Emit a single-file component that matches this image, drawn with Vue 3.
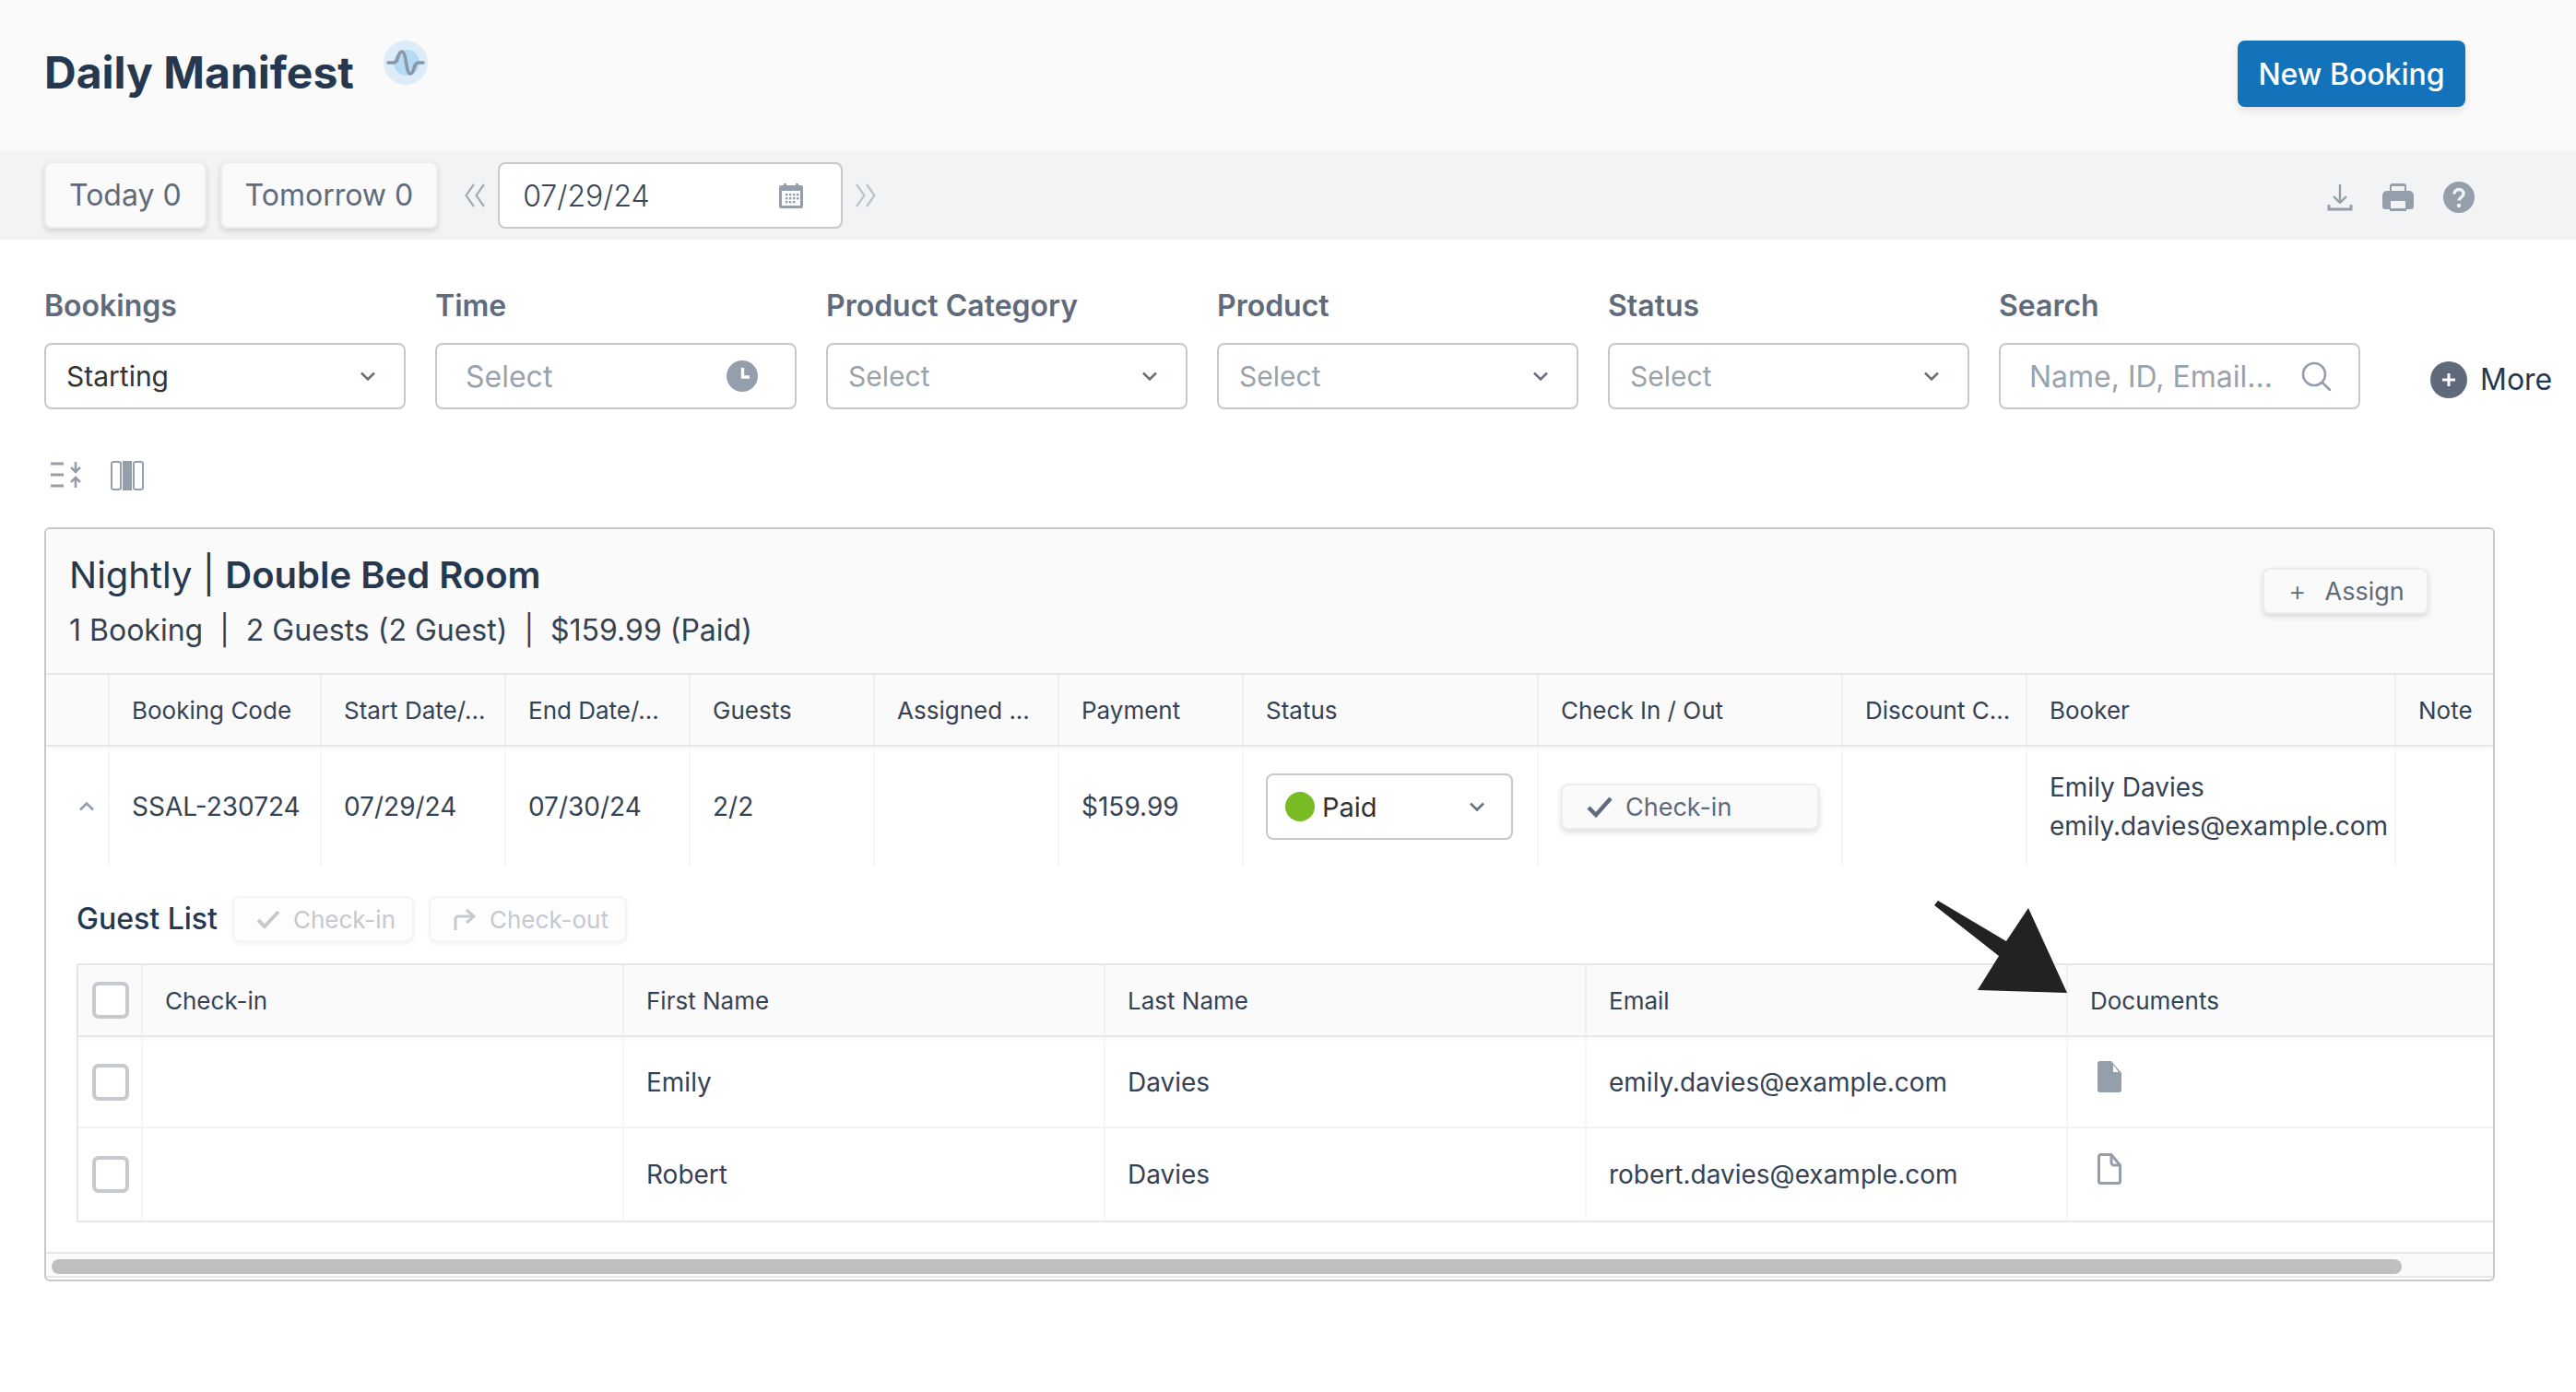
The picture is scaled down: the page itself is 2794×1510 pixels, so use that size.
<script setup>
const filters = [
  { label: 'Bookings', value: 'Starting', icon: 'chevron', filled: true },
  { label: 'Time', value: 'Select', icon: 'clock', big: true },
  { label: 'Product Category', value: 'Select', icon: 'chevron' },
  { label: 'Product', value: 'Select', icon: 'chevron' },
  { label: 'Status', value: 'Select', icon: 'chevron' },
  { label: 'Search', value: 'Name, ID, Email...', icon: 'search', big: true },
];

const bookingCols = [
  '',
  'Booking Code',
  'Start Date/...',
  'End Date/...',
  'Guests',
  'Assigned ...',
  'Payment',
  'Status',
  'Check In / Out',
  'Discount C...',
  'Booker',
  'Note',
];

const guestCols = ['', 'Check-in', 'First Name', 'Last Name', 'Email', 'Documents'];

const guests = [
  { first: 'Emily', last: 'Davies', email: 'emily.davies@example.com', hasDoc: true },
  { first: 'Robert', last: 'Davies', email: 'robert.davies@example.com', hasDoc: false },
];
</script>

<template>
  <div class="page">
    <header class="top">
      <div class="top__title">
        <h1>Daily Manifest</h1>
        <span class="pulse">
          <svg width="48" height="48" viewBox="0 0 48 48">
            <circle cx="24" cy="24" r="24" fill="#dcecf9" />
            <circle cx="25" cy="24" r="14" fill="#b5daf4" />
            <path d="M5 24h6c3 0 4-3 5-7 1-3 2-5 4-5s3 3 4 9c1 6 2 15 5 15s4-6 5-9c1-2 2-3 4-3h5" fill="none" stroke="#8b97a6" stroke-width="3.6" stroke-linecap="round" stroke-linejoin="round" />
          </svg>
        </span>
      </div>
      <button class="btn-primary">New Booking</button>
    </header>

    <div class="toolbar">
      <button class="btn-day">Today 0</button>
      <button class="btn-day">Tomorrow 0</button>
      <svg class="dbl" width="24" height="28" viewBox="0 0 24 28" fill="none" stroke="#a3abb5" stroke-width="2.2">
        <path d="M11 2 2.5 14 11 26M22 2l-8.5 12L22 26" />
      </svg>
      <div class="date">
        <span>07/29/24</span>
        <svg width="28" height="28" viewBox="0 0 28 28">
          <path d="M3 3h3V1h3v2h10V1h3v2h3a2 2 0 0 1 2 2v21a2 2 0 0 1-2 2H3a2 2 0 0 1-2-2V5a2 2 0 0 1 2-2z" fill="#959eab" />
          <rect x="4" y="9" width="20" height="16" fill="#fff" />
          <g fill="#959eab">
            <rect x="8" y="12" width="2.4" height="2.4" /><rect x="12" y="12" width="2.4" height="2.4" /><rect x="16" y="12" width="2.4" height="2.4" /><rect x="20" y="12" width="2.4" height="2.4" />
            <rect x="8" y="16" width="2.4" height="2.4" /><rect x="12" y="16" width="2.4" height="2.4" /><rect x="16" y="16" width="2.4" height="2.4" /><rect x="20" y="16" width="2.4" height="2.4" />
            <rect x="8" y="20" width="2.4" height="2.4" /><rect x="12" y="20" width="2.4" height="2.4" /><rect x="16" y="20" width="2.4" height="2.4" />
          </g>
        </svg>
      </div>
      <svg class="dbl dbl--next" width="24" height="28" viewBox="0 0 24 28" fill="none" stroke="#bcc2ca" stroke-width="2.2">
        <path d="m2 2 8.5 12L2 26M13 2l8.5 12L13 26" />
      </svg>
      <div class="toolbar__icons">
        <svg width="28" height="30" viewBox="0 0 28 30" fill="none" stroke="#959eab" stroke-width="2.4">
          <path d="M14 1v19M7 14l7 7 7-7" stroke-linejoin="round" />
          <path d="M2 23v5h24v-5" stroke-width="3" />
        </svg>
        <svg width="34" height="30" viewBox="0 0 34 30">
          <path d="M8 8V3a3 3 0 0 1 3-3h12a3 3 0 0 1 3 3v5h3a5 5 0 0 1 5 5v12a3 3 0 0 1-3 3h-5v2H8v-2H3a3 3 0 0 1-3-3V13a5 5 0 0 1 5-5z" fill="#959eab" />
          <rect x="10" y="3" width="14" height="5" fill="#f2f3f5" />
          <rect x="9" y="19" width="16" height="8" fill="#f2f3f5" />
        </svg>
        <svg width="34" height="34" viewBox="0 0 34 34">
          <circle cx="17" cy="17" r="17" fill="#959eab" />
          <path d="M12 13.5c0-3 2.200-5 5-5s5 2 5 4.500c0 4-5 4-5 7.500" fill="none" stroke="#f2f3f5" stroke-width="3.400" />
          <circle cx="17" cy="26" r="2.200" fill="#f2f3f5" />
        </svg>
      </div>
    </div>

    <section class="filters">
      <div v-for="f in filters" :key="f.label" class="filter">
        <label>{{ f.label }}</label>
        <div class="field" :class="{ 'field--big': f.big, 'field--filled': f.filled }">
          <span>{{ f.value }}</span>
          <svg v-if="f.icon === 'chevron'" class="chev" width="18" height="10" viewBox="0 0 18 10" fill="none" stroke="#68727f" stroke-width="2.600">
            <path d="m2 1.500 7 7 7-7" />
          </svg>
          <svg v-else-if="f.icon === 'clock'" class="clock" width="34" height="34" viewBox="0 0 34 34">
            <circle cx="17" cy="17" r="17" fill="#959eab" />
            <path d="M17.500 8v10H25" fill="none" stroke="#fff" stroke-width="3.400" />
          </svg>
          <svg v-else class="mag" width="32" height="32" viewBox="0 0 32 32" fill="none" stroke="#959eab" stroke-width="2.600">
            <circle cx="14" cy="14" r="12" />
            <path d="m23 23 8 8" stroke-linecap="round" />
          </svg>
        </div>
      </div>
      <div class="more">
        <span class="more__dot">
          <svg width="18" height="18" viewBox="0 0 18 18" stroke="#fff" stroke-width="3">
            <path d="M9 2v14M2 9h14" />
          </svg>
        </span>
        More
      </div>
    </section>

    <div class="view-tools">
      <svg width="36" height="30" viewBox="0 0 36 30" fill="none" stroke="#959eab">
        <path d="M1 3h14M1 15h14M1 27h14" stroke-width="3" />
        <path d="M28 1v10M23 7l5 5 5-5M28 29V19M23 23l5-5 5 5" stroke-width="2.600" />
      </svg>
      <svg width="36" height="32" viewBox="0 0 36 32">
        <rect x="1" y="1" width="10" height="30" rx="2" fill="none" stroke="#959eab" stroke-width="2" />
        <rect x="13" y="0" width="10" height="32" fill="#959eab" />
        <rect x="25" y="1" width="10" height="30" rx="2" fill="none" stroke="#959eab" stroke-width="2" />
      </svg>
    </div>

    <section class="card">
      <div class="card__head">
        <div>
          <h2>Nightly | <strong>Double Bed Room</strong></h2>
          <p>1 Booking &nbsp;|&nbsp; 2 Guests (2 Guest) &nbsp;|&nbsp; $159.99 (Paid)</p>
        </div>
        <button class="btn-ghost btn-assign"><span class="plus">+</span> Assign</button>
      </div>

      <div class="grid grid--bookings grid--head">
        <div v-for="(c, i) in bookingCols" :key="i" class="cell">{{ c }}</div>
      </div>
      <div class="grid grid--bookings grid--row">
        <div class="cell cell--toggle">
          <svg width="18" height="10" viewBox="0 0 18 10" fill="none" stroke="#959eab" stroke-width="2.600">
            <path d="m2 8.500 7-7 7 7" />
          </svg>
        </div>
        <div class="cell">SSAL-230724</div>
        <div class="cell">07/29/24</div>
        <div class="cell">07/30/24</div>
        <div class="cell">2/2</div>
        <div class="cell"></div>
        <div class="cell">$159.99</div>
        <div class="cell">
          <div class="status">
            <i class="status__dot"></i>
            <span>Paid</span>
            <svg width="18" height="10" viewBox="0 0 18 10" fill="none" stroke="#68727f" stroke-width="2.600">
              <path d="m2 1.500 7 7 7-7" />
            </svg>
          </div>
        </div>
        <div class="cell">
          <button class="btn-ghost btn-checkin">
            <svg width="28" height="24" viewBox="0 0 28 24" fill="none" stroke="#5f6b7a" stroke-width="4.400">
              <path d="m2 13 8 8L26 3" />
            </svg>
            Check-in
          </button>
        </div>
        <div class="cell"></div>
        <div class="cell cell--stack"><span>Emily Davies</span><span>emily.davies@example.com</span></div>
        <div class="cell"></div>
      </div>

      <div class="guests">
        <div class="guests__bar">
          <h3>Guest List</h3>
          <button class="btn-off">
            <svg width="26" height="22" viewBox="0 0 26 22" fill="none" stroke="#c5c9ce" stroke-width="4">
              <path d="m2 12 7 7L24 3" />
            </svg>
            Check-in
          </button>
          <button class="btn-off">
            <svg width="26" height="24" viewBox="0 0 26 24" fill="none" stroke="#c5c9ce" stroke-width="3">
              <path d="M3 24V12a3 3 0 0 1 3-3h16" />
              <path d="m15 2 8 7-8 7" />
            </svg>
            Check-out
          </button>
        </div>

        <div class="gtable">
          <div class="grid grid--guests grid--head">
            <template v-for="(c, i) in guestCols" :key="i">
              <div class="cell" :class="{ 'cell--check': i === 0 }">
                <i v-if="i === 0" class="box"></i>
                <template v-else>{{ c }}</template>
              </div>
            </template>
          </div>
          <div v-for="g in guests" :key="g.first" class="grid grid--guests grid--guest">
            <div class="cell cell--check"><i class="box"></i></div>
            <div class="cell"></div>
            <div class="cell">{{ g.first }}</div>
            <div class="cell">{{ g.last }}</div>
            <div class="cell">{{ g.email }}</div>
            <div class="cell">
              <svg class="doc" width="26" height="34" viewBox="0 0 26 34">
                <template v-if="g.hasDoc">
                  <path d="M3 0h12l11 13v18a3 3 0 0 1-3 3H3a3 3 0 0 1-3-3V3a3 3 0 0 1 3-3z" fill="#959eab" />
                  <path d="M17 4v8h6z" fill="#fff" />
                </template>
                <path v-else d="M3.500 1.500H15L24.500 13v17.500a2 2 0 0 1-2 2h-19a2 2 0 0 1-2-2v-27a2 2 0 0 1 2-2zM15 1.500V10a3 3 0 0 0 3 3h6.500" fill="none" stroke="#959eab" stroke-width="3" />
              </svg>
            </div>
          </div>
        </div>
      </div>

      <div class="scroll"><div class="scroll__thumb"></div></div>

      <svg class="arrow" width="152" height="104" viewBox="0 0 152 104">
        <path d="M5 0 1 5l70 55-23 37 97 3-42-92-24 36z" fill="#222" />
      </svg>
    </section>
  </div>
</template>

<style>
body {
  background: #fff;
}
</style>

<style scoped>
.page {
  width: 2794px;
  height: 1510px;
  overflow: hidden;
  font-family: Inter, 'Liberation Sans', sans-serif;
  color: #354254;
  background: #fff;
}

button {
  font-family: inherit;
  cursor: pointer;
}

.top {
  height: 164px;
  box-sizing: border-box;
  padding: 44px 120px 0 48px;
  display: flex;
  justify-content: space-between;
  align-items: flex-start;
  background: #fafafa;
}
.top__title {
  display: flex;
  align-items: flex-start;
  gap: 32px;
}
.top__title h1 {
  margin: 6px 0 0;
  font-size: 48px;
  line-height: 58px;
  font-weight: 700;
  color: #25384f;
}
.pulse {
  display: block;
  margin-top: 0;
  height: 48px;
}

.btn-primary {
  width: 247px;
  height: 72px;
  border: 0;
  border-radius: 8px;
  background: #1273ba;
  color: #fff;
  font-size: 32px;
  font-weight: 500;
  box-shadow: 0 4px 8px rgba(0, 0, 0, 0.1);
}

.toolbar {
  height: 96px;
  box-sizing: border-box;
  padding: 11px 110px 0 48px;
  display: flex;
  align-items: flex-start;
  background: #f2f3f5;
}
.btn-day {
  height: 73px;
  padding: 0 25px;
  margin-right: 15px;
  border: 2px solid #ecedef;
  border-radius: 8px;
  background: #fafafa;
  color: #5f6b7a;
  font-size: 32px;
  box-shadow: 0 3px 6px rgba(0, 0, 0, 0.14);
}
.dbl {
  margin: 23px 13px 0 13px;
}
.date {
  width: 374px;
  height: 72px;
  box-sizing: border-box;
  margin-top: 1px;
  padding: 0 40px 0 25px;
  display: flex;
  align-items: center;
  justify-content: space-between;
  border: 2px solid #c6c8cc;
  border-radius: 8px;
  background: #fff;
  font-size: 32px;
  font-weight: 300;
  color: #3b4655;
}
.toolbar__icons {
  margin: 22px 0 0 auto;
  display: flex;
  align-items: center;
  gap: 32px;
}

.filters {
  height: 183px;
  box-sizing: border-box;
  padding: 52px 0 0 48px;
  display: flex;
  gap: 32px;
}
.filter {
  width: 392px;
  flex: none;
}
.filter label {
  display: block;
  margin-bottom: 20px;
  font-size: 32px;
  line-height: 40px;
  font-weight: 600;
  color: #5f6b7a;
}
.field {
  height: 72px;
  box-sizing: border-box;
  padding: 0 30px 0 22px;
  display: flex;
  align-items: center;
  justify-content: space-between;
  border: 2px solid #c6c8cc;
  border-radius: 8px;
  font-size: 30px;
  color: #9aa2ac;
}
.field--big {
  padding-left: 31px;
  font-size: 32px;
}
.field--big .clock {
  margin-right: 10px;
}
.field--filled {
  color: #333;
  font-weight: 400;
}
.more {
  margin: 68px 0 0 44px;
  display: flex;
  align-items: center;
  gap: 14px;
  font-size: 32px;
  color: #25384f;
  white-space: nowrap;
}
.more__dot {
  width: 40px;
  height: 40px;
  display: flex;
  align-items: center;
  justify-content: center;
  border-radius: 50%;
  background: #5f6b7a;
}

.view-tools {
  height: 129px;
  box-sizing: border-box;
  padding: 57px 0 0 54px;
  display: flex;
  align-items: flex-start;
  gap: 30px;
}

.card {
  position: relative;
  width: 2658px;
  height: 818px;
  box-sizing: border-box;
  margin-left: 48px;
  border: 2px solid #c6c8cc;
  border-radius: 6px;
  overflow: hidden;
  background: #fff;
}
.card__head {
  height: 158px;
  box-sizing: border-box;
  padding: 22px 70px 0 25px;
  display: flex;
  justify-content: space-between;
  align-items: flex-start;
  border-bottom: 2px solid #e6e7e8;
  background: #fafafa;
}
.card__head h2 {
  margin: 0 0 10px;
  font-size: 40px;
  line-height: 56px;
  font-weight: 400;
  color: #25384f;
}
.card__head strong {
  font-weight: 600;
}
.card__head p {
  margin: 0;
  font-size: 32px;
  line-height: 44px;
  color: #354254;
}

.btn-ghost {
  display: flex;
  align-items: center;
  border: 2px solid #ecedef;
  border-radius: 8px;
  background: #fafafa;
  color: #5f6b7a;
  font-size: 27px;
  box-shadow: 0 3px 6px rgba(0, 0, 0, 0.14);
}
.btn-assign {
  width: 180px;
  height: 50px;
  margin-top: 20px;
  padding: 0 26px;
}
.plus {
  margin-right: 20px;
  font-size: 30px;
  font-weight: 300;
}
.btn-checkin {
  width: 281px;
  height: 50px;
  padding: 0 26px;
  gap: 14px;
}

.grid {
  display: grid;
}
.grid--bookings {
  grid-template-columns: 69px 230px repeat(5, 200px) 320px 330px 200px 400px 1fr;
}
.grid--head {
  height: 78px;
  box-sizing: border-box;
  border-bottom: 2px solid #e6e7e8;
  background: #fafafa;
  font-size: 26px;
  color: #354254;
  box-shadow: 0 2px 6px rgba(0, 0, 0, 0.04);
}
.grid--head .cell {
  border-right: 2px solid #eeeff0;
}
.grid--head .cell:last-child {
  border-right: 0;
}
.grid--row {
  height: 130px;
  font-size: 28px;
}
.cell {
  box-sizing: border-box;
  padding: 0 24px;
  display: flex;
  align-items: center;
  border-right: 2px solid #f7f7f8;
  white-space: nowrap;
  overflow: hidden;
}
.grid--row .cell {
  overflow: visible;
}
.cell:last-child {
  border-right: 0;
}
.cell--toggle {
  padding: 0 0 0 35px;
  align-items: center;
}
.cell--stack {
  flex-direction: column;
  align-items: flex-start;
  justify-content: center;
  line-height: 42px;
}
.status {
  width: 268px;
  height: 72px;
  box-sizing: border-box;
  padding: 0 28px 0 19px;
  display: flex;
  align-items: center;
  gap: 8px;
  border: 2px solid #c6c8cc;
  border-radius: 8px;
  font-size: 29px;
  color: #333;
}
.status svg {
  margin-left: auto;
}
.status__dot {
  width: 32px;
  height: 32px;
  border-radius: 50%;
  background: #78bb22;
}

.guests {
  height: 418px;
  box-sizing: border-box;
  padding-left: 33px;
}
.guests__bar {
  height: 105px;
  box-sizing: border-box;
  padding-top: 32px;
  display: flex;
  align-items: flex-start;
  gap: 16px;
}
.guests__bar h3 {
  margin: 0;
  font-size: 32px;
  line-height: 50px;
  font-weight: 500;
  color: #25384f;
}
.btn-off {
  height: 50px;
  padding: 0 18px 0 24px;
  display: flex;
  align-items: center;
  gap: 14px;
  border: 2px solid #f3f4f5;
  border-radius: 8px;
  background: #fdfdfd;
  color: #c5c9ce;
  font-size: 26px;
  box-shadow: 0 2px 4px rgba(0, 0, 0, 0.05);
}
.gtable {
  border-top: 2px solid #e6e7e8;
  border-left: 2px solid #e6e7e8;
}
.grid--guests {
  grid-template-columns: 70px 522px 522px 522px 522px 1fr;
}
.grid--guest {
  height: 99px;
  box-sizing: border-box;
  border-bottom: 2px solid #f2f2f3;
  font-size: 28px;
}
.grid--guest:last-child {
  height: 102px;
  border-bottom: 2px solid #e6e7e8;
}
.cell--check {
  padding: 0 0 0 15px;
}
.box {
  display: block;
  width: 40px;
  height: 40px;
  box-sizing: border-box;
  border: 4px solid #c6c9ce;
  border-radius: 7px;
  background: #fff;
}
.doc {
  margin: 0 0 12px 8px;
}

.scroll {
  height: 28px;
  box-sizing: border-box;
  margin-top: 0;
  padding: 6px 0 0 6px;
  border-top: 2px solid #e6e7e8;
  background: #fafafa;
  border-bottom: 2px solid #e6e7e8;
}
.scroll__thumb {
  width: 2549px;
  height: 16px;
  border-radius: 8px;
  background: #bfbfbf;
}

.arrow {
  position: absolute;
  left: 2047px;
  top: 403px;
}
</style>
